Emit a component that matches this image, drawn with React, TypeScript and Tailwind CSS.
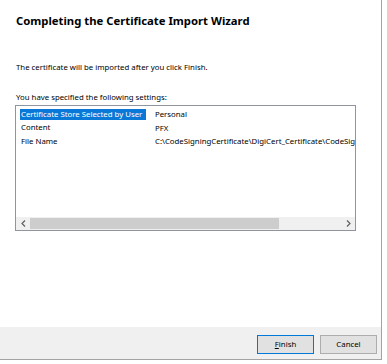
import React from "react";

const rows = [
  { name: "Certificate Store Selected by User", value: "Personal", selected: true },
  { name: "Content", value: "PFX" },
  { name: "File Name", value: "C:\\CodeSigningCertificate\\DigiCert_Certificate\\CodeSig" },
];

export default function App() {
  return (
    <div className="h-[364px] w-[387px] bg-white font-['Noto_Sans',sans-serif] text-black">
      <div className="flex h-[360px] w-[382px] flex-col border-b border-r border-[#a3a3a3]">
        <div className="flex-1 pl-[16px] pt-[13px]">
          <h1 className="text-[11.3px] font-bold leading-[16px] text-black">
            Completing the Certificate Import Wizard
          </h1>
          <p className="mt-[32px] text-[7.8px] leading-[12px]">
            The certificate will be imported after you click Finish.
          </p>
          <p className="mt-[18px] text-[7.8px] leading-[12px]">
            You have specified the following settings:
          </p>
          <div className="ml-[-1px] mt-[2px] flex h-[126px] w-[341px] flex-col border border-[#8f959e] bg-white">
            <div className="flex-1 pt-[2px] text-[7.8px]">
              {rows.map((r) => (
                <div key={r.name} className="flex h-[13.5px] items-center">
                  <div className="w-[139px] shrink-0 pl-[4px]">
                    <span
                      className={
                        r.selected
                          ? "inline-block bg-[#0a78d7] pl-[1px] pr-[4px] leading-[11px] text-white"
                          : "inline-block px-[1px] leading-[11px]"
                      }
                    >
                      {r.name}
                    </span>
                  </div>
                  <div className="min-w-0 flex-1 overflow-hidden whitespace-nowrap pr-[2px] leading-[11px]">
                    {r.value}
                  </div>
                </div>
              ))}
            </div>
            <div className="flex h-[13px] items-stretch bg-[#f0f0f0]">
              <div className="flex w-[14px] items-center justify-center">
                <svg width="5" height="7" viewBox="0 0 5 7">
                  <path d="M4 0.5 L1 3.5 L4 6.5" fill="none" stroke="#606060" strokeWidth="1.2" />
                </svg>
              </div>
              <div className="my-[1px] w-[249px] bg-[#cdcdcd]" />
              <div className="flex-1" />
              <div className="flex w-[14px] items-center justify-center">
                <svg width="5" height="7" viewBox="0 0 5 7">
                  <path d="M1 0.5 L4 3.5 L1 6.5" fill="none" stroke="#606060" strokeWidth="1.2" />
                </svg>
              </div>
            </div>
          </div>
        </div>
        <div className="flex h-[32px] items-start justify-end gap-[6px] bg-[#f0f0f0] pr-[4px] pt-[8px] text-[7.8px]">
          <button className="h-[19px] w-[57px] border border-[#0078d7] bg-[#e1e1e1]">
            <span className="underline">F</span>inish
          </button>
          <button className="h-[19px] w-[57px] border border-[#adadad] bg-[#e1e1e1]">
            Cancel
          </button>
        </div>
      </div>
    </div>
  );
}
